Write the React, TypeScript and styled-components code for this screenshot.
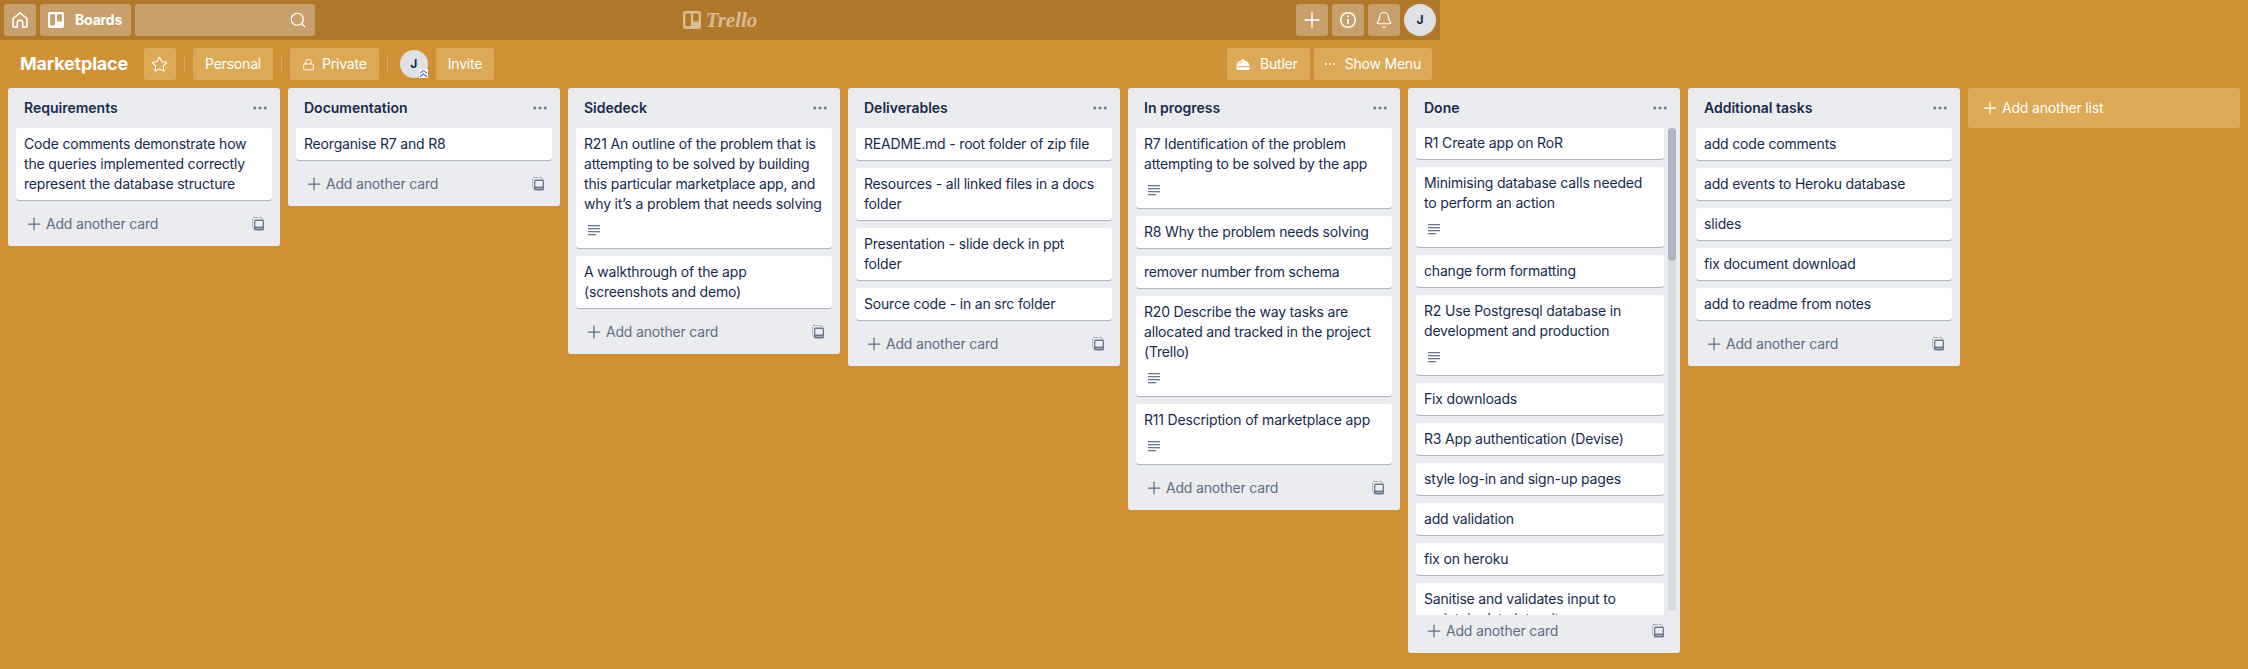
import React from 'react';
import styled, { createGlobalStyle } from 'styled-components';
import { Bell, Lock, MoreHorizontal, Plus, Search, Star } from 'lucide-react';

const GlobalStyle = createGlobalStyle`
  html, body {
    margin: 0;
    padding: 0;
    height: 100%;
    background: #d29034;
    overflow: hidden;
  }
  * {
    box-sizing: border-box;
  }
`;

const Page = styled.div`
  height: 669px;
  background: #d29034;
  font-family: Inter, 'Noto Sans', sans-serif;
  font-size: 14px;
  line-height: 20px;
  letter-spacing: -0.18px;
  color: #172b4d;
  overflow: hidden;
`;

const TopBar = styled.header`
  width: 1440px;
  height: 40px;
  padding: 4px;
  background: rgba(0, 0, 0, 0.16);
  display: grid;
  grid-template-columns: 1fr auto 1fr;
  align-items: center;
`;

const BarGroup = styled.div<{ $end?: boolean }>`
  display: flex;
  gap: 4px;
  justify-content: ${({ $end }) => ($end ? 'flex-end' : 'flex-start')};
`;

const BarButton = styled.div<{ $wide?: boolean }>`
  height: 32px;
  min-width: 32px;
  border-radius: 3px;
  background: rgba(255, 255, 255, 0.3);
  color: #fff;
  display: flex;
  align-items: center;
  justify-content: center;
  gap: 11px;
  font-weight: 700;
  padding: ${({ $wide }) => ($wide ? '0 9px 0 8px' : '0')};
`;

const SearchBox = styled.div`
  width: 180px;
  height: 32px;
  border-radius: 3px;
  background: rgba(255, 255, 255, 0.3);
  color: #fff;
  display: flex;
  align-items: center;
  justify-content: flex-end;
  padding-right: 8px;
`;

const Logo = styled.div`
  display: flex;
  align-items: center;
  gap: 5px;
  color: rgba(255, 255, 255, 0.5);
`;

const LogoText = styled.span`
  font-family: 'Liberation Serif', serif;
  font-style: italic;
  font-weight: 700;
  font-size: 21px;
  line-height: 32px;
  letter-spacing: 0;
`;

const Avatar = styled.div<{ $size: number }>`
  position: relative;
  width: ${({ $size }) => $size}px;
  height: ${({ $size }) => $size}px;
  border-radius: 50%;
  background: #dfe1e6;
  color: #172b4d;
  font-size: 12px;
  font-weight: 700;
  display: flex;
  align-items: center;
  justify-content: center;
`;

const AdminBadge = styled.span`
  position: absolute;
  right: 0;
  bottom: 0;
  width: 9px;
  height: 9px;
  background: #fff;
  color: #5a6dd8;
  display: flex;
`;

const BoardHeader = styled.div`
  width: 1440px;
  height: 48px;
  padding: 8px;
  display: flex;
  justify-content: space-between;
`;

const HeaderGroup = styled.div`
  display: flex;
  align-items: center;
`;

const BoardTitle = styled.h1`
  margin: 0 4px 0 0;
  padding: 0 12px;
  font-size: 18px;
  line-height: 32px;
  font-weight: 700;
  letter-spacing: -0.2px;
  color: #fff;
`;

const HeaderButton = styled.div<{ $square?: boolean; $gap?: number; $pad?: string }>`
  height: 32px;
  width: ${({ $square }) => ($square ? '32px' : 'auto')};
  padding: ${({ $square, $pad }) => ($square ? '0' : $pad ?? '0 12px')};
  margin-right: 4px;
  border-radius: 3px;
  background: #dcaa56;
  color: #fff;
  letter-spacing: -0.2px;
  display: flex;
  align-items: center;
  justify-content: center;
  gap: ${({ $gap }) => $gap ?? 10}px;
  &:last-child {
    margin-right: 0;
  }
`;

const Divider = styled.span`
  width: 1px;
  height: 16px;
  margin: 0 8px 0 4px;
  background: rgba(255, 255, 255, 0.24);
`;

const AvatarSlot = styled.div`
  margin: 0 8px 0 4px;
`;

const Canvas = styled.main`
  display: flex;
  align-items: flex-start;
  gap: 8px;
  padding: 0 8px;
`;

const ListBox = styled.section`
  flex: 0 0 272px;
  width: 272px;
  background: #ebecf0;
  border-radius: 3px;
`;

const ListHeader = styled.div`
  height: 40px;
  padding: 0 11px 0 16px;
  display: flex;
  align-items: center;
  justify-content: space-between;
  color: #6b778c;
`;

const ListTitle = styled.h2`
  margin: 0;
  font-size: 14px;
  line-height: 20px;
  font-weight: 600;
  letter-spacing: 0;
  color: #172b4d;
`;

const CardStack = styled.div`
  display: flow-root;
  padding: 0 8px;
`;

const ScrollArea = styled.div`
  display: flex;
  height: 487px;
`;

const Viewport = styled.div`
  flex: 1;
  min-width: 0;
  padding-left: 8px;
  overflow: hidden;
`;

const ScrolledStack = styled.div`
  margin-top: -1px;
`;

const Track = styled.div`
  flex: 0 0 8px;
  height: 483px;
  margin: 0 4px;
  border-radius: 4px;
  background: rgba(9, 30, 66, 0.08);
`;

const Thumb = styled.div`
  height: 133px;
  border-radius: 4px;
  background: rgba(9, 30, 66, 0.2);
`;

const Card = styled.article`
  background: #fff;
  border-radius: 3px;
  box-shadow: 0 1px 0 rgba(9, 30, 66, 0.25);
  padding: 6px 8px 2px;
  margin-bottom: 8px;
`;

const CardText = styled.div`
  margin-bottom: 4px;
  color: #172b4d;
`;

const Badge = styled.div`
  height: 28px;
  display: flex;
  align-items: center;
  padding-left: 4px;
  padding-bottom: 4px;
  color: #6b778c;
`;

const AddCard = styled.div`
  height: 28px;
  margin: 2px 8px 8px;
  padding: 0 8px;
  display: flex;
  align-items: center;
  justify-content: space-between;
  color: #5e6c84;
`;

const AddLabel = styled.span`
  display: flex;
  align-items: center;
  gap: 2px;
`;

const TemplateGlyph = styled.span`
  display: flex;
  color: #6b778c;
`;

const AddList = styled.div`
  flex: 0 0 272px;
  height: 40px;
  padding: 0 12px;
  border-radius: 3px;
  background: #dcaa56;
  color: #fff;
  display: flex;
  align-items: center;
  gap: 2px;
`;

const HomeIcon = () => (
  <svg width="18" height="18" viewBox="0 0 18 18" fill="none" stroke="currentColor" strokeWidth="1.6" strokeLinejoin="round">
    <path d="M2 7.6 9 1.8l7 5.8v7.2a1.4 1.4 0 0 1-1.4 1.4h-2.9v-4.4a2.7 2.7 0 0 0-5.4 0v4.4H3.4A1.4 1.4 0 0 1 2 14.8z" />
  </svg>
);

const BoardsIcon = ({ size }: { size: number }) => (
  <svg width={size} height={size} viewBox="0 0 16 16">
    <path
      fill="currentColor"
      fillRule="evenodd"
      d="M2 0h12a2 2 0 0 1 2 2v12a2 2 0 0 1-2 2H2a2 2 0 0 1-2-2V2a2 2 0 0 1 2-2zm.6 2.2a.5.5 0 0 0-.5.5v10.2a.5.5 0 0 0 .5.5h3.9a.5.5 0 0 0 .5-.5V2.700a.5.5 0 0 0-.5-.5zm7 0a.5.5 0 0 0-.5.5v6.200a.5.5 0 0 0 .5.5h3.800a.5.5 0 0 0 .5-.5V2.700a.5.5 0 0 0-.5-.5z"
    />
  </svg>
);

const InfoIcon = () => (
  <svg width="18" height="18" viewBox="0 0 18 18" fill="none" stroke="currentColor" strokeWidth="1.5">
    <circle cx="9" cy="9" r="7.3" />
    <path d="M9 8v5" strokeWidth="1.8" />
    <circle cx="9" cy="5.300" r="1" fill="currentColor" stroke="none" />
  </svg>
);

const ButlerIcon = () => (
  <svg width="14" height="13" viewBox="0 0 14 13">
    <path fill="currentColor" d="M6.200 1.500a.8.8 0 1 1 1.600 0v.7C11 2.600 13.300 5 13.600 8.200H.4C.7 5 3 2.600 6.200 2.200zM0 9.300h14v.9a1.800 1.800 0 0 1-1.800 1.800H1.800A1.800 1.800 0 0 1 0 10.200z" />
    <path stroke="#dcaa56" strokeWidth="1" fill="none" d="M3 6.500C3.600 5.300 4.500 4.500 5.800 4" />
  </svg>
);

const ChevronsUp = () => (
  <svg width="9" height="9" viewBox="0 0 9 9" fill="none" stroke="currentColor" strokeWidth="1.2">
    <path d="M1 4.200 4.500 1.400 8 4.200M1 7.800 4.500 5 8 7.800" />
  </svg>
);

const DescriptionIcon = () => (
  <svg width="12" height="12" viewBox="0 0 12 12" fill="currentColor">
    <rect x="0" y="1" width="12" height="1.300" />
    <rect x="0" y="4" width="12" height="1.300" />
    <rect x="0" y="7" width="12" height="1.300" />
    <rect x="0" y="10" width="8" height="1.300" />
  </svg>
);

const TemplateIcon = () => (
  <svg width="12" height="14" viewBox="0 0 12 14" fill="none">
    <rect x="0.500" y="0.500" width="10" height="10.500" rx="1.500" stroke="currentColor" strokeDasharray="1.400 1.200" opacity="0.75" />
    <rect x="2" y="2.500" width="10" height="11" rx="1.500" fill="currentColor" />
    <rect x="3.300" y="4" width="7.400" height="5.500" fill="#ebecf0" />
    <rect x="3.300" y="11.200" width="7.400" height="0.700" fill="#ebecf0" opacity="0.6" />
  </svg>
);

type CardData = { text: string; badge?: boolean };
type ListData = { title: string; cards: CardData[] };

const c = (text: string, badge?: boolean): CardData => ({ text, badge });

const lists: ListData[] = [
  {
    title: 'Requirements',
    cards: [c('Code comments demonstrate how the queries implemented correctly represent the database structure')],
  },
  { title: 'Documentation', cards: [c('Reorganise R7 and R8')] },
  {
    title: 'Sidedeck',
    cards: [
      c('R21 An outline of the problem that is attempting to be solved by building this particular marketplace app, and why it’s a problem that needs solving', true),
      c('A walkthrough of the app (screenshots and demo)'),
    ],
  },
  {
    title: 'Deliverables',
    cards: [
      c('README.md - root folder of zip file'),
      c('Resources - all linked files in a docs folder'),
      c('Presentation - slide deck in ppt folder'),
      c('Source code - in an src folder'),
    ],
  },
  {
    title: 'In progress',
    cards: [
      c('R7 Identification of the problem attempting to be solved by the app', true),
      c('R8 Why the problem needs solving'),
      c('remover number from schema'),
      c('R20 Describe the way tasks are allocated and tracked in the project (Trello)', true),
      c('R11 Description of marketplace app', true),
    ],
  },
];

const doneCards: CardData[] = [
  c('R1 Create app on RoR'),
  c('Minimising database calls needed to perform an action', true),
  c('change form formatting'),
  c('R2 Use Postgresql database in development and production', true),
  c('Fix downloads'),
  c('R3 App authentication (Devise)'),
  c('style log-in and sign-up pages'),
  c('add validation'),
  c('fix on heroku'),
  c('Sanitise and validates input to maintain data integrity'),
];

const extraList: ListData = {
  title: 'Additional tasks',
  cards: [
    c('add code comments'),
    c('add events to Heroku database'),
    c('slides'),
    c('fix document download'),
    c('add to readme from notes'),
  ],
};

const CardItem = ({ card }: { card: CardData }) => (
  <Card>
    <CardText>{card.text}</CardText>
    {card.badge && (
      <Badge>
        <DescriptionIcon />
      </Badge>
    )}
  </Card>
);

const ListTop = ({ title }: { title: string }) => (
  <ListHeader>
    <ListTitle>{title}</ListTitle>
    <MoreHorizontal size={18} strokeWidth={2} />
  </ListHeader>
);

const AddCardRow = () => (
  <AddCard>
    <AddLabel>
      <Plus size={20} strokeWidth={1.5} />
      Add another card
    </AddLabel>
    <TemplateGlyph>
      <TemplateIcon />
    </TemplateGlyph>
  </AddCard>
);

const List = ({ list }: { list: ListData }) => (
  <ListBox>
    <ListTop title={list.title} />
    <CardStack>
      {list.cards.map((card) => (
        <CardItem key={card.text} card={card} />
      ))}
    </CardStack>
    <AddCardRow />
  </ListBox>
);

const DoneList = () => (
  <ListBox>
    <ListTop title="Done" />
    <ScrollArea>
      <Viewport>
        <ScrolledStack>
          {doneCards.map((card) => (
            <CardItem key={card.text} card={card} />
          ))}
        </ScrolledStack>
      </Viewport>
      <Track>
        <Thumb />
      </Track>
    </ScrollArea>
    <AddCardRow />
  </ListBox>
);

export default function App() {
  return (
    <Page>
      <GlobalStyle />
      <TopBar>
        <BarGroup>
          <BarButton>
            <HomeIcon />
          </BarButton>
          <BarButton $wide>
            <BoardsIcon size={16} />
            Boards
          </BarButton>
          <SearchBox>
            <Search size={18} strokeWidth={1.6} />
          </SearchBox>
        </BarGroup>
        <Logo>
          <BoardsIcon size={18} />
          <LogoText>Trello</LogoText>
        </Logo>
        <BarGroup $end>
          <BarButton>
            <Plus size={24} strokeWidth={1.5} />
          </BarButton>
          <BarButton>
            <InfoIcon />
          </BarButton>
          <BarButton>
            <Bell size={18} strokeWidth={1.6} />
          </BarButton>
          <Avatar $size={32}>J</Avatar>
        </BarGroup>
      </TopBar>
      <BoardHeader>
        <HeaderGroup>
          <BoardTitle>Marketplace</BoardTitle>
          <HeaderButton $square>
            <Star size={17} strokeWidth={1.6} />
          </HeaderButton>
          <Divider />
          <HeaderButton>Personal</HeaderButton>
          <Divider />
          <HeaderButton $gap={7}>
            <Lock size={13} strokeWidth={1.75} />
            Private
          </HeaderButton>
          <Divider />
          <AvatarSlot>
            <Avatar $size={28}>
              J
              <AdminBadge>
                <ChevronsUp />
              </AdminBadge>
            </Avatar>
          </AvatarSlot>
          <HeaderButton>Invite</HeaderButton>
        </HeaderGroup>
        <HeaderGroup>
          <HeaderButton $pad="0 12px 0 9px">
            <ButlerIcon />
            Butler
          </HeaderButton>
          <HeaderButton $pad="0 11px 0 9px" $gap={8}>
            <MoreHorizontal size={14} strokeWidth={1.75} />
            Show Menu
          </HeaderButton>
        </HeaderGroup>
      </BoardHeader>
      <Canvas>
        {lists.map((list) => (
          <List key={list.title} list={list} />
        ))}
        <DoneList />
        <List list={extraList} />
        <AddList>
          <Plus size={20} strokeWidth={1.5} />
          Add another list
        </AddList>
      </Canvas>
    </Page>
  );
}
